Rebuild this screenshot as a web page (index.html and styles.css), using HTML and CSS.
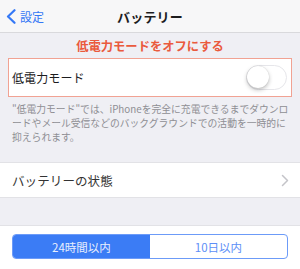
FILE: index.html
```html
<!DOCTYPE html>
<html lang="ja">
<head>
<meta charset="utf-8">
<link rel="stylesheet" href="styles.css">
</head>
<body>
<div class="nav">
  <div class="back">
    <svg class="chev" width="10" height="15" viewBox="0 0 10 15"><path d="M8.5 1.2 L2 7.5 L8.5 13.8" fill="none" stroke="#3478f6" stroke-width="2.2" stroke-linecap="round" stroke-linejoin="round"/></svg>
    <span>設定</span>
  </div>
  <div class="title">バッテリー</div>
  <div></div>
</div>
<div class="banner">低電力モードをオフにする</div>
<div class="lowrow">
  <span class="label">低電力モード</span>
  <span class="toggle"><span class="knob"></span></span>
</div>
<p class="note">"低電力モード"では、iPhoneを完全に充電できるまでダウンロードやメール受信などのバックグラウンドでの活動を一時的に抑えられます。</p>
<div class="row">
  <span class="label">バッテリーの状態</span>
  <svg width="8" height="13" viewBox="0 0 8 13"><path d="M1.5 1.5 L6.5 6.5 L1.5 11.5" fill="none" stroke="#c4c4c9" stroke-width="1.5" stroke-linecap="round" stroke-linejoin="round"/></svg>
</div>
<div class="bottom">
  <div class="seg">
    <div class="opt on">24時間以内</div>
    <div class="opt">10日以内</div>
  </div>
</div>
</body>
</html>
```
FILE: styles.css
```css
* { box-sizing: border-box; }
html, body { margin: 0; padding: 0; }
body {
  width: 300px;
  height: 269px;
  overflow: hidden;
  background: #efeff4;
  font-family: "Noto Sans CJK JP", "Noto Sans", sans-serif;
  color: #1c1c1e;
}
.nav {
  height: 33px;
  background: #f7f7f8;
  border-bottom: 1px solid #d9d9dc;
  display: grid;
  grid-template-columns: 1fr auto 1fr;
  align-items: center;
}
.back {
  display: flex;
  align-items: center;
  gap: 4px;
  padding-left: 6px;
  color: #3478f6;
  font-size: 12px;
}
.chev { display: block; }
.title {
  font-size: 13px;
  font-weight: 700;
  letter-spacing: 0.2px;
}
.banner {
  height: 25px;
  display: flex;
  align-items: center;
  justify-content: center;
  color: #ea5a3d;
  font-weight: 700;
  font-size: 12.3px;
}
.lowrow {
  margin: 0 8px;
  height: 39px;
  background: #fff;
  border: 1.5px solid #f1a293;
  display: flex;
  align-items: center;
  justify-content: space-between;
  padding: 0 4px 0 3px;
}
.label {
  font-size: 12px;
  letter-spacing: 0.1px;
}
.toggle {
  width: 41px;
  height: 25px;
  border-radius: 13px;
  background: #fff;
  border: 1.5px solid #e6e6ea;
  position: relative;
  display: block;
}
.knob {
  position: absolute;
  left: 0;
  top: 0;
  width: 22px;
  height: 22px;
  border-radius: 50%;
  background: #fff;
  box-shadow: 0 2px 4px rgba(0,0,0,0.25), 0 0 1px rgba(0,0,0,0.2);
}
.note {
  margin: 0;
  padding: 5px 6px 0 12px;
  height: 65px;
  font-size: 9.8px;
  line-height: 14px;
  color: #8e8e93;
  letter-spacing: 0;
}
.row {
  height: 36px;
  background: #fff;
  border-top: 1px solid #e2e2e6;
  border-bottom: 1px solid #e2e2e6;
  display: flex;
  align-items: center;
  justify-content: space-between;
  padding: 0 11px 0 12px;
}
.row .label { font-size: 12.5px; color: #333; }
.bottom {
  margin-top: 27px;
  background: #fff;
  border-top: 1px solid #e2e2e6;
  padding: 8px 12px 10px 12px;
  height: 50px;
}
.seg {
  display: grid;
  grid-template-columns: 1fr 1fr;
  height: 25px;
  border: 1px solid #6c9bf8;
  border-radius: 4px;
  overflow: hidden;
}
.opt {
  display: flex;
  align-items: center;
  justify-content: center;
  font-size: 11.5px;
  color: #5d8ff7;
}
.opt.on {
  background: #3b7cf5;
  color: #e8effd;
}
```
